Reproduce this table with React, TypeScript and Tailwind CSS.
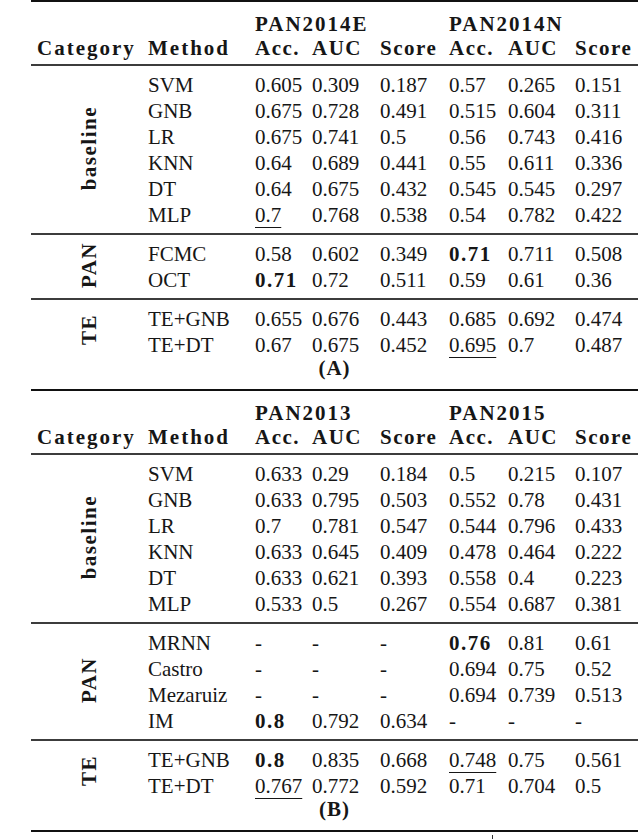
const cols = 'grid grid-cols-[117px_107px_57px_68px_69px_59px_67px_1fr]';

type Group = { label: string; rows: string[][] };
type Table = { sets: [string, string]; groups: Group[]; caption: string };

// "*" prefix = bold, "_" prefix = underlined
const tables: Table[] = [
  {
    sets: ['PAN2014E', 'PAN2014N'],
    caption: '(A)',
    groups: [
      {
        label: 'baseline',
        rows: [
          ['SVM', '0.605', '0.309', '0.187', '0.57', '0.265', '0.151'],
          ['GNB', '0.675', '0.728', '0.491', '0.515', '0.604', '0.311'],
          ['LR', '0.675', '0.741', '0.5', '0.56', '0.743', '0.416'],
          ['KNN', '0.64', '0.689', '0.441', '0.55', '0.611', '0.336'],
          ['DT', '0.64', '0.675', '0.432', '0.545', '0.545', '0.297'],
          ['MLP', '_0.7', '0.768', '0.538', '0.54', '0.782', '0.422'],
        ],
      },
      {
        label: 'PAN',
        rows: [
          ['FCMC', '0.58', '0.602', '0.349', '*0.71', '0.711', '0.508'],
          ['OCT', '*0.71', '0.72', '0.511', '0.59', '0.61', '0.36'],
        ],
      },
      {
        label: 'TE',
        rows: [
          ['TE+GNB', '0.655', '0.676', '0.443', '0.685', '0.692', '0.474'],
          ['TE+DT', '0.67', '0.675', '0.452', '_0.695', '0.7', '0.487'],
        ],
      },
    ],
  },
  {
    sets: ['PAN2013', 'PAN2015'],
    caption: '(B)',
    groups: [
      {
        label: 'baseline',
        rows: [
          ['SVM', '0.633', '0.29', '0.184', '0.5', '0.215', '0.107'],
          ['GNB', '0.633', '0.795', '0.503', '0.552', '0.78', '0.431'],
          ['LR', '0.7', '0.781', '0.547', '0.544', '0.796', '0.433'],
          ['KNN', '0.633', '0.645', '0.409', '0.478', '0.464', '0.222'],
          ['DT', '0.633', '0.621', '0.393', '0.558', '0.4', '0.223'],
          ['MLP', '0.533', '0.5', '0.267', '0.554', '0.687', '0.381'],
        ],
      },
      {
        label: 'PAN',
        rows: [
          ['MRNN', '-', '-', '-', '*0.76', '0.81', '0.61'],
          ['Castro', '-', '-', '-', '0.694', '0.75', '0.52'],
          ['Mezaruiz', '-', '-', '-', '0.694', '0.739', '0.513'],
          ['IM', '*0.8', '0.792', '0.634', '-', '-', '-'],
        ],
      },
      {
        label: 'TE',
        rows: [
          ['TE+GNB', '*0.8', '0.835', '0.668', '_0.748', '0.75', '0.561'],
          ['TE+DT', '_0.767', '0.772', '0.592', '0.71', '0.704', '0.5'],
        ],
      },
    ],
  },
];

function Cell({ v }: { v: string }) {
  if (v.startsWith('*')) return <span className="font-bold tracking-[1.5px]">{v.slice(1)}</span>;
  if (v.startsWith('_'))
    return <span className="underline decoration-1 underline-offset-[5px]">{v.slice(1)}</span>;
  return <span>{v}</span>;
}

const ThickRule = () => <div className="h-[2px] bg-[#111]" />;
const MidRule = () => <div className="h-[2px] bg-[#3c3c3c]" />;

function GroupBlock({ g }: { g: Group }) {
  return (
    <div className="flex">
      <div className="w-[117px] flex items-center justify-center">
        <span className="font-bold tracking-[1.5px] [writing-mode:vertical-rl] rotate-180 leading-none">
          {g.label}
        </span>
      </div>
      <div className="flex-1">
        {g.rows.map((r, i) => (
          <div key={i} className="grid grid-cols-[107px_57px_68px_69px_59px_67px_1fr] h-[26px] items-center">
            {r.map((v, j) => (
              <div key={j} className="whitespace-nowrap">
                <Cell v={v} />
              </div>
            ))}
          </div>
        ))}
      </div>
    </div>
  );
}

function TableBlock({ t }: { t: Table }) {
  return (
    <div>
      <div className={`${cols} h-[24px] items-center mt-[7px] font-bold tracking-[2px]`}>
        <div className="col-start-3 col-span-3">{t.sets[0]}</div>
        <div className="col-span-3">{t.sets[1]}</div>
      </div>
      <div className={`${cols} h-[24px] items-center font-bold tracking-[1.5px]`}>
        <div className="pl-[6px] tracking-[2px]">Category</div>
        <div className="tracking-[2px]">Method</div>
        <div>Acc.</div>
        <div>AUC</div>
        <div>Score</div>
        <div>Acc.</div>
        <div>AUC</div>
        <div>Score</div>
      </div>
      <div className="mt-[7px] mb-[4px]">
        <MidRule />
      </div>
      {t.groups.map((g, i) => (
        <div key={i}>
          {i > 0 && (
            <div className="mt-[7px] mb-[4px]">
              <MidRule />
            </div>
          )}
          <GroupBlock g={g} />
        </div>
      ))}
      <div className="h-[26px] flex items-center justify-center font-bold tracking-[1px]">{t.caption}</div>
      <div className="mt-[7px]">
        <ThickRule />
      </div>
    </div>
  );
}

export default function App() {
  return (
    <div className="w-[640px] h-[839px] overflow-hidden bg-white text-[#161616] font-['Liberation_Serif',serif] text-[21px]">
      <div className="ml-[31px] w-[607px]">
        <ThickRule />
        {tables.map((t, i) => (
          <TableBlock key={i} t={t} />
        ))}
        <div className="ml-[461px] mt-[3px] w-px h-[5px] bg-[#333]" />
      </div>
    </div>
  );
}
